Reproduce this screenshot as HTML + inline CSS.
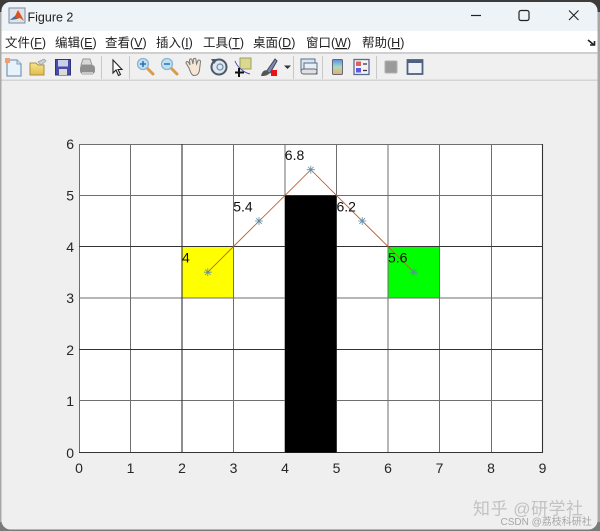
<!DOCTYPE html>
<html><head><meta charset="utf-8">
<style>
html,body{margin:0;padding:0;width:600px;height:531px;overflow:hidden;background:#9a9a9a}
svg{display:block;filter:blur(0.3px)}
text{font-family:"Liberation Sans","Noto Sans CJK SC",sans-serif}
</style></head><body>
<svg width="600" height="531" viewBox="0 0 600 531" xmlns="http://www.w3.org/2000/svg">
<defs>
<clipPath id="w"><rect x="1.500" y="2" width="596" height="527.500" rx="9"/></clipPath>
<linearGradient id="cb" x1="0" y1="0" x2="0" y2="1"><stop offset="0" stop-color="#5a8ee8"/><stop offset=".5" stop-color="#a8dcc0"/><stop offset="1" stop-color="#f0a860"/></linearGradient>
<linearGradient id="fo" x1="0" y1="0" x2="0" y2="1"><stop offset="0" stop-color="#f5e68c"/><stop offset="1" stop-color="#e2bc4a"/></linearGradient>
</defs>
<rect width="600" height="531" fill="#a8a8a8"/>
<rect width="600" height="12" fill="#3c3c3c"/>
<rect y="522" width="600" height="9" fill="#7a7a7a"/>
<g clip-path="url(#w)">
<rect width="600" height="531" fill="#efefef"/>
<rect y="0" width="600" height="31" fill="#edf3f7"/>
<rect y="31" width="600" height="21" fill="#ffffff"/>
<rect y="52" width="600" height="2" fill="#cfcfcf"/>
<rect y="54" width="600" height="26" fill="#f0f0f0"/>
<rect y="79.500" width="600" height="1.500" fill="#d4d4d4"/>
</g>
<!-- title -->
<rect x="9" y="8" width="16" height="15" fill="#dfe3ea" stroke="#7d8ba0" stroke-width="1"/>
<path d="M10 20 L15 16 L18 10 L21 15 L24 21 L20 18 L17 19 Z" fill="#d9541e"/>
<path d="M10 20 L15 16 L17 19 Z" fill="#3f6fa8"/>
<text x="27.500" y="21.500" font-size="12.500" fill="#222">Figure 2</text>
<path d="M471 15.500H481" stroke="#222" stroke-width="1.200"/>
<rect x="519" y="10.500" width="10" height="10" rx="2" fill="none" stroke="#222" stroke-width="1.200"/>
<path d="M569 10.500L578.500 20M578.500 10.500L569 20" stroke="#222" stroke-width="1.100"/>
<!-- menu -->
<g font-size="12.500" fill="#222">
<text x="5" y="47">文件(<tspan text-decoration="underline">F</tspan>)</text>
<text x="55" y="47">编辑(<tspan text-decoration="underline">E</tspan>)</text>
<text x="105" y="47">查看(<tspan text-decoration="underline">V</tspan>)</text>
<text x="156" y="47">插入(<tspan text-decoration="underline">I</tspan>)</text>
<text x="203" y="47">工具(<tspan text-decoration="underline">T</tspan>)</text>
<text x="253" y="47">桌面(<tspan text-decoration="underline">D</tspan>)</text>
<text x="306" y="47">窗口(<tspan text-decoration="underline">W</tspan>)</text>
<text x="362" y="47">帮助(<tspan text-decoration="underline">H</tspan>)</text>
</g>
<path d="M588 40L594 45M590 45H594.500V41" stroke="#222" stroke-width="1.600" fill="none"/>
<!-- toolbar separators -->
<path d="M101.500 56V79M129.500 56V79M293.500 56V79M322.500 56V79M376.500 56V79" stroke="#c8c8c8" stroke-width="1"/>
<!-- new -->
<path d="M7 60H17L21 64V76H7Z" fill="#e8f2fb" stroke="#7e9dbd" stroke-width="1.300"/>
<path d="M17 60V64H21" fill="#cfe0f0" stroke="#7e9dbd"/>
<rect x="5" y="58" width="5" height="5" fill="#f0a070"/>
<!-- open -->
<path d="M30 63H36L38 65H44V75H30Z" fill="url(#fo)" stroke="#a89040"/>
<path d="M38 62L44 59L46 61L41 65Z" fill="#c8d0d8" stroke="#9a9a9a" stroke-width=".7"/>
<!-- save -->
<rect x="55.500" y="59.500" width="15" height="15.500" fill="#4a4aa8" stroke="#33337a"/>
<rect x="58" y="60" width="10" height="6.500" fill="#c8d0ea"/>
<rect x="59" y="69" width="8" height="6" fill="#dadada"/>
<!-- print -->
<path d="M83 59H90L92 65H81Z" fill="#d8d8d8" stroke="#999"/>
<rect x="80" y="65" width="15" height="9" rx="3" fill="#8f8f8f"/>
<rect x="82" y="72" width="11" height="3" fill="#c8c8c8"/>
<!-- pointer -->
<path d="M113 60V73L116 70L118.500 75.500L120.500 74.500L118 69.500H122Z" fill="#fff" stroke="#222" stroke-width="1.100"/>
<!-- zoom in -->
<circle cx="143" cy="64" r="5.500" fill="#bfe0f3" stroke="#8db4d0" stroke-width="1.300"/>
<path d="M140 64H146M143 61V67" stroke="#2a6fb0" stroke-width="1.500"/>
<path d="M148 69L153 74" stroke="#dc9a4a" stroke-width="3" stroke-linecap="round"/>
<!-- zoom out -->
<circle cx="167" cy="64" r="5.500" fill="#bfe0f3" stroke="#8db4d0" stroke-width="1.300"/>
<path d="M164 64H170" stroke="#2a6fb0" stroke-width="1.500"/>
<path d="M172 69L177 74" stroke="#dc9a4a" stroke-width="3" stroke-linecap="round"/>
<!-- hand -->
<path d="M189 68L186 63C186 61 188 61 189 63L190 65L189.500 60C190 58 192 59 192 60L193 64L193.500 59C194 58 196 58 196 60L196.500 64L198 60.500C199 59.500 200.500 60 200.500 61.500L199.500 70C199 74 197 75.500 194 75.500C191.500 75.500 190.500 72 189 68Z" fill="#f6e6d6" stroke="#777" stroke-width="1"/>
<!-- rotate -->
<circle cx="219" cy="67" r="7.500" fill="#dfe6ee" stroke="#4a5a6a" stroke-width="2"/>
<path d="M211 59L214 64L218 59Z" fill="#4a5a6a"/>
<circle cx="220" cy="67" r="3" fill="none" stroke="#6a8aa8" stroke-width="1.200"/>
<!-- data cursor -->
<rect x="240" y="58" width="11" height="11" fill="#d8d890" stroke="#a0a060"/>
<path d="M235 61C237 66 242 72 250 74" stroke="#5050b0" fill="none"/>
<path d="M239 68V77M235 72.500H244" stroke="#111" stroke-width="2"/>
<!-- brush -->
<path d="M266 72L275 59L277 61L270 73Z" fill="#7a8ab0" stroke="#445"/>
<path d="M261 76C262 71 265 69 268 71L269 74C266 76 264 76 261 76Z" fill="#555"/>
<rect x="271" y="70" width="6" height="6" fill="#ee1111"/>
<path d="M284 65.500H291L287.500 69Z" fill="#333"/>
<!-- link -->
<rect x="301" y="59" width="14" height="11" fill="#dbe4ef" stroke="#55708f"/>
<rect x="304" y="63" width="13" height="11" fill="#e8eef5" stroke="#55708f"/>
<rect x="301" y="69" width="16" height="5" rx="2.500" fill="#e0e0e0" stroke="#667"/>
<!-- colorbar -->
<rect x="332.500" y="59.500" width="10" height="15" rx="1" fill="url(#cb)" stroke="#667"/>
<!-- legend -->
<rect x="354" y="59.500" width="15" height="15" fill="#f2f2f6" stroke="#5a6a90" stroke-width="1.300"/>
<rect x="356" y="61.500" width="5" height="4.500" fill="#e06060"/>
<rect x="356" y="68" width="5" height="4.500" fill="#5a5ae0"/>
<path d="M363 64H367M363 70.500H367" stroke="#333" stroke-width="1.200"/>
<!-- hide -->
<rect x="385" y="61" width="12" height="12" rx="1" fill="#9a9a9a" stroke="#b0b0b0"/>
<!-- show -->
<rect x="407.500" y="60" width="15" height="14" fill="#eef2f6" stroke="#4f6080" stroke-width="1.800"/>
<rect x="407" y="60" width="16" height="3" fill="#4f6080"/>
<!-- plot -->
<rect x="79" y="144" width="463.500" height="308.500" fill="#fff"/>
<rect x="182" y="246.500" width="51.500" height="51.400" fill="#ffff00"/>
<rect x="388" y="246.500" width="51.500" height="51.400" fill="#00ff00"/>
<g stroke="#6e6e6e" stroke-width="1" fill="none">
<path d="M79.500 144V452.500M130.500 144V452.500M233.500 144V452.500M285 144V452.500M336.500 144V452.500M388 144V452.500M439.500 144V452.500M491.500 144V452.500"/>
<path d="M79 144.500H543M79 195.500H543M79 298H543M79 400.500H543"/>
</g>
<g stroke="#333" stroke-width="1.100" fill="none">
<path d="M182 144V452.500M542.500 144V452.500M79 246.500H543M79 349.500H543M79 452.500H543"/>
</g>
<rect x="285" y="195.400" width="51.500" height="257.100" fill="#000"/>
<path d="M207.800 272.200L233.500 246.500L285 195.400L310.800 169.700L336.500 195.400L362.200 221L388 246.500L413.800 272.200" fill="none" stroke="#bd6234" stroke-width="0.900"/>
<g stroke="#5e8da5" stroke-width="0.800" fill="none">
<path d="M203.800 272.200H211.800M207.800 268.200V276.200M205 269.400L210.600 275M205 275L210.600 269.400"/>
<path d="M255 221H263M259 217V225M256.200 218.200L261.800 223.800M256.200 223.800L261.800 218.200"/>
<path d="M306.800 169.700H314.800M310.800 165.700V173.700M308 166.900L313.600 172.500M308 172.500L313.600 166.900"/>
<path d="M358.200 221H366.200M362.200 217V225M359.400 218.200L365 223.800M359.400 223.800L365 218.200"/>
<path d="M409.800 272.200H417.800M413.800 268.200V276.200M411 269.400L416.600 275M411 275L416.600 269.400"/>
</g>
<g font-size="14" fill="#111">
<text x="182" y="262.500">4</text>
<text x="233.200" y="211.500">5.4</text>
<text x="284.800" y="160">6.8</text>
<text x="336.500" y="211.500">6.2</text>
<text x="388" y="262.500">5.6</text>
</g>
<g font-size="14" fill="#262626" text-anchor="end">
<text x="74" y="149">6</text>
<text x="74" y="200.500">5</text>
<text x="74" y="252">4</text>
<text x="74" y="303">3</text>
<text x="74" y="355">2</text>
<text x="74" y="406">1</text>
<text x="74" y="458">0</text>
</g>
<g font-size="14" fill="#262626" text-anchor="middle">
<text x="79" y="473">0</text>
<text x="130.500" y="473">1</text>
<text x="182" y="473">2</text>
<text x="233.500" y="473">3</text>
<text x="285" y="473">4</text>
<text x="336.500" y="473">5</text>
<text x="388" y="473">6</text>
<text x="439.500" y="473">7</text>
<text x="491" y="473">8</text>
<text x="542.500" y="473">9</text>
</g>
<!-- watermarks -->
<text x="473" y="514.500" font-size="17" fill="#c2c2c2" letter-spacing="0.500">知乎 @研学社</text>
<text x="500.500" y="525" font-size="10" fill="#a6a6a6">CSDN @荔枝科研社</text>
</svg>
</body></html>
